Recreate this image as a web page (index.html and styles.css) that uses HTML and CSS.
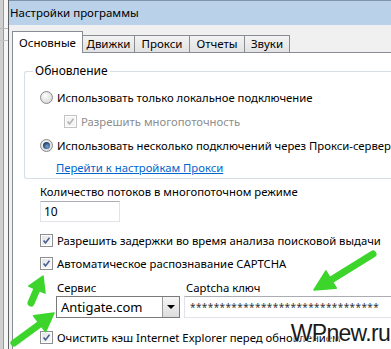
FILE: index.html
```html
<!DOCTYPE html>
<html>
	<head>
		<meta charset="UTF-8">
		<title>Настройки программы</title>
		<link rel="stylesheet" href="styles.css">
	</head>

	<body>
		<div class='screen'>
			<div class='desk'></div>
			<div class='window'>
				<div class='titlebar'>Настройки программы</div>
				<div class='client'>
					<div class='tabs'>
						<div class='tab active tab-main'>Основные</div>
						<div class='tab tab-engines'>Движки</div>
						<div class='tab tab-proxy'>Прокси</div>
						<div class='tab tab-reports'>Отчеты</div>
						<div class='tab tab-sounds'>Звуки</div>
					</div>

					<div class='panel'>
						<fieldset class='group'>
							<legend>Обновление</legend>
							<div class='row'><span class='radio'></span>Использовать только локальное подключение</div>
							<div class='row sub disabled'>
								<span class='check'><svg viewBox='0 0 13 13'><path d='M3 6.5 L5.4 9.3 L10 3.2'/></svg></span>Разрешить многопоточность
							</div>
							<div class='row'><span class='radio on'></span>Использовать несколько подключений через Прокси-сервер</div>
							<div class='row link-row'><a href='#'>Перейти к настройкам Прокси</a></div>
						</fieldset>

						<div class='field'>
							<label for='threads'>Количество потоков в многопоточном режиме</label>
							<input id='threads' class='text threads' value='10'>
						</div>

						<div class='row outer delays'>
							<span class='check'><svg viewBox='0 0 13 13'><path d='M3 6.5 L5.4 9.3 L10 3.2'/></svg></span>Разрешить задержки во время анализа поисковой выдачи
						</div>
						<div class='row outer'>
							<span class='check'><svg viewBox='0 0 13 13'><path d='M3 6.5 L5.4 9.3 L10 3.2'/></svg></span>Автоматическое распознавание CAPTCHA
						</div>

						<div class='captcha'>
							<div class='col service'>
								<label>Сервис</label>
								<div class='combo'>
									<span class='value'>Antigate.com</span>
									<span class='drop'></span>
								</div>
							</div>
							<div class='col key'>
								<label>Captcha ключ</label>
								<div class='text key-input'>********************************</div>
							</div>
						</div>

						<div class='row outer cache'>
							<span class='check'><svg viewBox='0 0 13 13'><path d='M3 6.5 L5.4 9.3 L10 3.2'/></svg></span>Очистить кэш Internet Explorer перед обновлением
						</div>
					</div>
				</div>
			</div>
		</div>

		<svg class='arrows' viewBox='0 0 391 349'>
			<g class='arrow'>
				<line x1='31' y1='303' x2='37' y2='289'/>
				<polygon points='43,276 45,293 28.7,286'/>
			</g>
			<g class='arrow'>
				<line x1='14' y1='343' x2='40' y2='324'/>
				<polygon points='54,313 45.6,331.8 33.6,315.8'/>
			</g>
			<g class='arrow'>
				<line x1='373' y1='254' x2='331' y2='280'/>
				<polygon points='314,290 325.9,271 336.3,288.2'/>
			</g>
		</svg>

		<div class='watermark'>WPnew.ru</div>
	</body>
</html>
```

FILE: styles.css
```css
body {
	margin: 0;
	width: 391px;
	height: 349px;
	overflow: hidden;
	position: relative;
	font-family: "Noto Sans", sans-serif;
	font-size: 11.3px;
	color: #000;
	background: #fff;
}

.screen {
	display: flex;
	height: 349px;
}

.desk {
	flex: none;
	width: 8px;
	background:
		linear-gradient(to bottom, transparent 28px, #b8b8b8 28px, #b8b8b8 29px, transparent 29px, transparent 40px, #c4c4c4 40px, #c4c4c4 41px, transparent 41px),
		linear-gradient(to right, #cfcfcf 0, #cfcfcf 3px, #9a9a9a 3px, #9a9a9a 4px, #f6f6f6 4px);
}

.window {
	flex: none;
	width: 430px;
	border-left: 1px solid #5e6166;
	display: flex;
	flex-direction: column;
}

.titlebar {
	height: 24px;
	border-top: 1px solid #7f94ab;
	background: #bad1ea;
	padding-left: 1px;
	line-height: 24px;
	font-size: 11.5px;
	color: #000;
}

.client {
	flex: 1;
	background: #f0f0f0;
	padding: 6px 0 0 3px;
	display: flex;
	flex-direction: column;
}

/* tabs */
.tabs {
	display: flex;
	align-items: flex-end;
	height: 21px;
	position: relative;
	z-index: 1;
}

.tab {
	box-sizing: border-box;
	height: 17px;
	border: 1px solid #898c95;
	border-bottom: none;
	margin-left: -1px;
	background: linear-gradient(#f3f3f3, #e2e2e2);
	text-align: center;
	line-height: 16px;
	font-size: 11.5px;
}

.tab.active {
	height: 22px;
	margin-left: 0;
	margin-bottom: -1px;
	background: #fff;
	line-height: 22px;
	z-index: 2;
}

.tab-main { width: 71px; }
.tab-engines { width: 53px; }
.tab-proxy { width: 56px; }
.tab-reports { width: 56px; }
.tab-sounds { width: 46px; }

.panel {
	flex: 1;
	border: 1px solid #898c95;
	background: #fff;
}

/* group box */
fieldset.group {
	margin: 10px 0 0 11px;
	padding: 6px 0 1px 15px;
	border: 1px solid #d5dfe5;
	border-right: none;
	border-radius: 3px 0 0 3px;
}

fieldset.group legend {
	margin-left: -7px;
	padding: 0 2px;
	font-size: 12px;
	line-height: 16px;
}

.row {
	display: flex;
	align-items: center;
	height: 24px;
	white-space: nowrap;
}

.row.sub {
	padding-left: 24px;
}

.row.disabled {
	color: #8d8d8d;
}

.row.link-row {
	height: 20px;
	padding-left: 16px;
}

.row.link-row a {
	color: #0066cc;
}

.row.outer {
	height: 23px;
	padding-left: 27px;
}

.row.delays {
	margin-top: 7px;
}

.row.cache {
	margin-top: 8px;
}

/* radio and checkbox */
.radio {
	flex: none;
	box-sizing: border-box;
	width: 13px;
	height: 13px;
	margin-right: 4px;
	border-radius: 50%;
	border: 1px solid #8a8a8a;
	background: radial-gradient(circle at 40% 35%, #fdfdfd, #dadada 75%);
	position: relative;
}

.radio.on::after {
	content: '';
	position: absolute;
	left: 2px;
	top: 2px;
	width: 7px;
	height: 7px;
	border-radius: 50%;
	background: radial-gradient(circle at 60% 65%, #7ba3d4, #1e3f66 70%);
}

.check {
	flex: none;
	box-sizing: border-box;
	width: 13px;
	height: 13px;
	margin-right: 4px;
	border: 1px solid #8e8f8f;
	background: linear-gradient(135deg, #dfe2e6, #fbfbfb);
	box-shadow: inset 0 0 0 1px #fff;
}

.check svg {
	display: block;
	width: 11px;
	height: 11px;
}

.check path {
	fill: none;
	stroke: #4a5d8f;
	stroke-width: 1.9;
	stroke-linejoin: round;
}

.disabled .check {
	border-color: #c2c2c2;
	background: #f4f4f4;
}

.disabled .check path {
	stroke: #b4b4b4;
}

/* threads field */
.field {
	display: flex;
	flex-direction: column;
	align-items: flex-start;
	padding-left: 27px;
	margin-top: 4px;
}

.field label {
	line-height: 18px;
}

.text {
	box-sizing: border-box;
	border: 1px solid #e2e3ea;
	border-top-color: #abadb3;
	background: #fff;
	font: inherit;
	color: #000;
}

input.threads {
	width: 80px;
	height: 21px;
	margin: 0;
	padding: 0 3px;
	font-size: 12px;
}

/* captcha service */
.captcha {
	display: flex;
	gap: 4px;
	padding-left: 43px;
	margin-top: 4px;
}

.col {
	display: flex;
	flex-direction: column;
}

.col label {
	line-height: 17px;
	padding-left: 1px;
}

.col.key label {
	padding-left: 2px;
}

.combo {
	box-sizing: border-box;
	width: 124px;
	height: 22px;
	display: flex;
	border: 1px solid #7a7a7a;
	background: #fff;
}

.combo .value {
	flex: 1;
	line-height: 20px;
	padding-left: 4px;
	font-size: 13px;
}

.combo .drop {
	flex: none;
	width: 16px;
	border-left: 1px solid #9a9a9a;
	background: linear-gradient(#f6f6f6, #dcdcdc);
	position: relative;
}

.combo .drop::after {
	content: '';
	position: absolute;
	left: 4px;
	top: 8px;
	border-left: 4px solid transparent;
	border-right: 4px solid transparent;
	border-top: 4px solid #000;
}

.key-input {
	width: 230px;
	height: 22px;
	line-height: 20px;
	padding-left: 5px;
	font-size: 10px;
	letter-spacing: 0.4px;
	color: #333;
	overflow: hidden;
	white-space: nowrap;
}

/* overlays */
.arrows {
	position: absolute;
	left: 0;
	top: 0;
	width: 391px;
	height: 349px;
	pointer-events: none;
}

.arrow line {
	stroke: #3dd52c;
	stroke-width: 7;
	stroke-linecap: round;
}

.arrow polygon {
	fill: #3dd52c;
	stroke: #3dd52c;
	stroke-width: 1.5;
	stroke-linejoin: round;
}

.watermark {
	position: absolute;
	right: 1px;
	bottom: 2px;
	font-family: "Liberation Sans", sans-serif;
	font-size: 23px;
	letter-spacing: -0.7px;
	color: #1a1a1a;
	text-shadow: 0 0 2px #fff, 0 0 2px #fff, 0 0 3px #fff;
}
```
